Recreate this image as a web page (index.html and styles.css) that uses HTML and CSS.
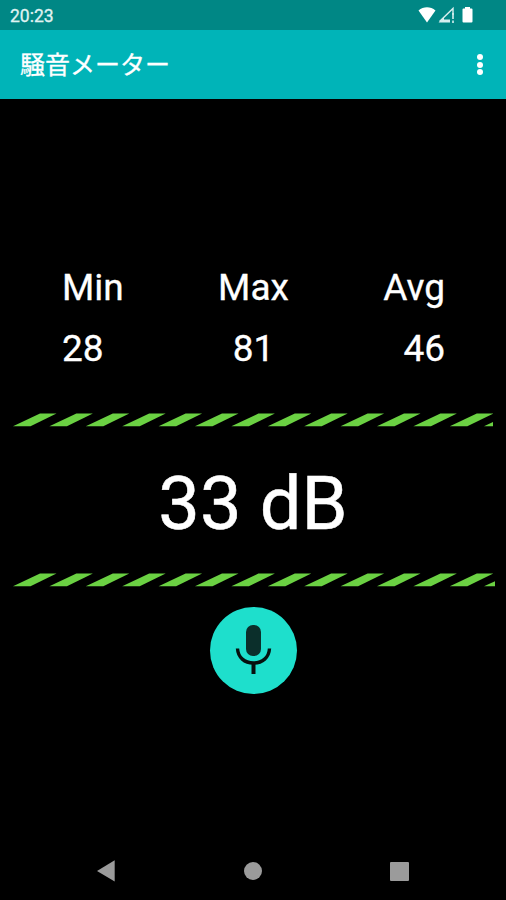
FILE: index.html
```
<!DOCTYPE html>
<html lang="ja">

<head>
    <meta charset="UTF-8">
    <meta name="viewport" content="width=device-width, initial-scale=1.0">
    <title>騒音メーター</title>
    <link rel="stylesheet" href="styles.css">
</head>

<body>
    <!-- ステータスバー -->
    <div class="status_bar">
        <span class="time">20:23</span>
        <svg class="status_icons" width="56" height="18" viewBox="0 0 56 18">
            <path d="M0.5 4.5C5.5 0.3 12.5 0.3 17.5 4.5L9 16.5Z" fill="#fff" />
            <path d="M21.5 15.5L35 2.5V9" fill="none" stroke="#d8efef" stroke-width="1.4" />
            <path d="M20.5 16.5L26 11.5V13.5H32V16.5Z" fill="#d8efef" />
            <path d="M35 7V13M35 14.5V17" stroke="#d8efef" stroke-width="1.6" />
            <path d="M47 2.5V1H52V2.5H53.5Q54.5 2.5 54.5 3.5V15.5Q54.5 16.5 53.5 16.5H45.5Q44.5 16.5 44.5 15.5V3.5Q44.5 2.5 45.5 2.5Z" fill="#fff" />
        </svg>
    </div>

    <!-- タイトル -->
    <div class="app_bar">
        <h1>騒音メーター</h1>
        <div class="menu">
            <span></span>
            <span></span>
            <span></span>
        </div>
    </div>

    <!-- メーター -->
    <div class="meter">
        <div class="stats">
            <div class="stat left">
                <p>Min</p>
                <p>28</p>
            </div>
            <div class="stat">
                <p>Max</p>
                <p>81</p>
            </div>
            <div class="stat right">
                <p>Avg</p>
                <p>46</p>
            </div>
        </div>

        <svg class="stripes" width="480" height="14">
            <defs>
                <path id="stripe" d="M0 13.3L27 0.6H43.5L17.5 13.3Z" />
                <g id="stripe_row" fill="#6bd143">
                    <use href="#stripe" />
                    <use href="#stripe" x="36.4" />
                    <use href="#stripe" x="72.8" />
                    <use href="#stripe" x="109.2" />
                    <use href="#stripe" x="145.6" />
                    <use href="#stripe" x="182" />
                    <use href="#stripe" x="218.4" />
                    <use href="#stripe" x="254.8" />
                    <use href="#stripe" x="291.2" />
                    <use href="#stripe" x="327.6" />
                    <use href="#stripe" x="364" />
                    <use href="#stripe" x="400.4" />
                    <use href="#stripe" x="436.8" />
                    <use href="#stripe" x="471" />
                </g>
            </defs>
            <use href="#stripe_row" />
        </svg>

        <p class="db">33 dB</p>

        <svg class="stripes" width="482" height="14">
            <use href="#stripe_row" />
        </svg>

        <div class="mic">
            <svg width="87" height="87" viewBox="0 0 87 87">
                <rect x="36" y="18" width="15" height="31" rx="7" fill="#0b2f2b" />
                <path d="M27.5 41.5C28 50.5 34.5 56 43.5 56S59 50.5 59.5 41.5" fill="none" stroke="#06110f" stroke-width="3.4" />
                <path d="M43.5 56V67" stroke="#06110f" stroke-width="4" />
            </svg>
        </div>
    </div>

    <!-- ナビゲーション -->
    <div class="nav_bar">
        <svg width="18" height="22" viewBox="0 0 18 22">
            <path d="M0 11L17.7 0.3V21.5Z" fill="#9b9b9b" />
        </svg>
        <span class="home"></span>
        <span class="recent"></span>
    </div>
</body>

</html>
```
FILE: styles.css
```
* {
    padding: 0px;
    margin: 0px;
    box-sizing: border-box;
}

body {
    height: 900px;
    display: flex;
    flex-direction: column;
    overflow: hidden;
    background-color: #000;
    color: #fff;
    font-family: Roboto, "Noto Sans CJK JP", sans-serif;
}

.status_bar {
    height: 30px;
    padding: 2px 32px 0 10px;
    display: flex;
    align-items: center;
    justify-content: space-between;
    background-color: #008785;
}

.time {
    font-size: 17.5px;
    color: #e0f3f2;
    -webkit-text-stroke: 0.3px #e0f3f2;
}

.status_icons {
    margin-top: -3px;
}

.app_bar {
    height: 69px;
    padding: 0 23px 0 20px;
    display: flex;
    align-items: center;
    justify-content: space-between;
    background-color: #00b4b8;
}

.app_bar h1 {
    padding-top: 2px;
    font-size: 25px;
    font-weight: 400;
    line-height: 36px;
    -webkit-text-stroke: 0.3px #fff;
}

.menu {
    display: flex;
    flex-direction: column;
    gap: 1.5px;
}

.menu span {
    width: 6px;
    height: 6px;
    border-radius: 50%;
    background-color: #fff;
}

.meter {
    flex: 1;
    padding-top: 158px;
    display: flex;
    flex-direction: column;
    align-items: center;
}

.stats {
    width: 506px;
    height: 156px;
    padding: 0 61px 0 62px;
    display: grid;
    grid-template-columns: 1fr 1fr 1fr;
    font-size: 37px;
    line-height: 61px;
    text-align: center;
    -webkit-text-stroke: 0.3px #fff;
}

.left {
    text-align: left;
}

.right {
    text-align: right;
}

.stripes {
    display: block;
    align-self: flex-start;
    margin-left: 13px;
}

.db {
    font-size: 74px;
    line-height: 146px;
    padding-top: 4px;
    height: 146px;
    -webkit-text-stroke: 0.5px #fff;
}

.mic {
    width: 87px;
    height: 87px;
    margin-top: 20px;
    border-radius: 50%;
    background-color: #1edfcc;
}

.nav_bar {
    height: 58px;
    padding: 0 97px;
    display: flex;
    align-items: center;
    justify-content: space-between;
}

.home {
    width: 18px;
    height: 18px;
    border-radius: 50%;
    background-color: #9b9b9b;
}

.recent {
    width: 19px;
    height: 19px;
    border-radius: 1px;
    background-color: #9b9b9b;
}
```
